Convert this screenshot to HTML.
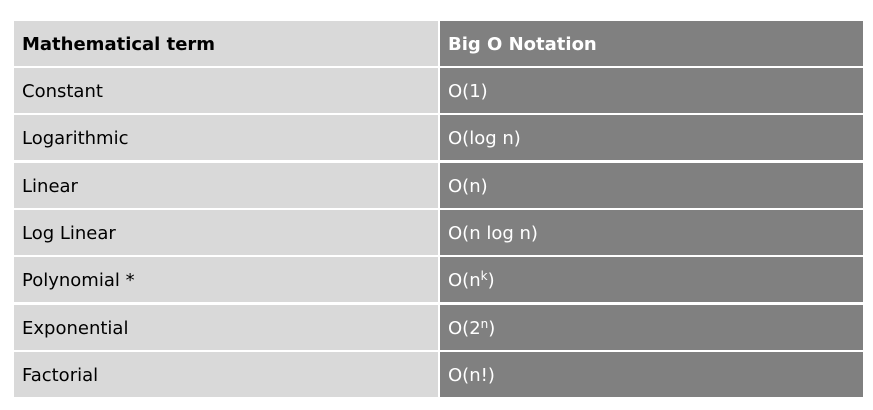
<!DOCTYPE html>
<html><head><style>
body{margin:0;width:873px;height:410px;background:#fff;position:relative;font-family:"DejaVu Sans","Liberation Sans",sans-serif;overflow:hidden}
.c{position:absolute;height:45px;line-height:48px;font-size:18px;box-sizing:border-box;padding-left:8px;white-space:nowrap}
.l{left:14px;width:424px;background:#d9d9d9;color:#000}
.r{left:440px;width:423px;background:#808080;color:#fff}
.h{font-weight:bold;font-size:18px}
sup{font-size:12px;vertical-align:6px;line-height:0}
</style></head><body>
<div class="c l h" style="top:21px">Mathematical term</div><div class="c r h" style="top:21px">Big O Notation</div>
<div class="c l" style="top:68px">Constant</div><div class="c r" style="top:68px">O(1)</div>
<div class="c l" style="top:115px">Logarithmic</div><div class="c r" style="top:115px">O(log n)</div>
<div class="c l" style="top:163px">Linear</div><div class="c r" style="top:163px">O(n)</div>
<div class="c l" style="top:210px">Log Linear</div><div class="c r" style="top:210px">O(n log n)</div>
<div class="c l" style="top:257px">Polynomial *</div><div class="c r" style="top:257px">O(n<sup>k</sup>)</div>
<div class="c l" style="top:305px">Exponential</div><div class="c r" style="top:305px">O(2<sup>n</sup>)</div>
<div class="c l" style="top:352px">Factorial</div><div class="c r" style="top:352px">O(n!)</div>
</body></html>
